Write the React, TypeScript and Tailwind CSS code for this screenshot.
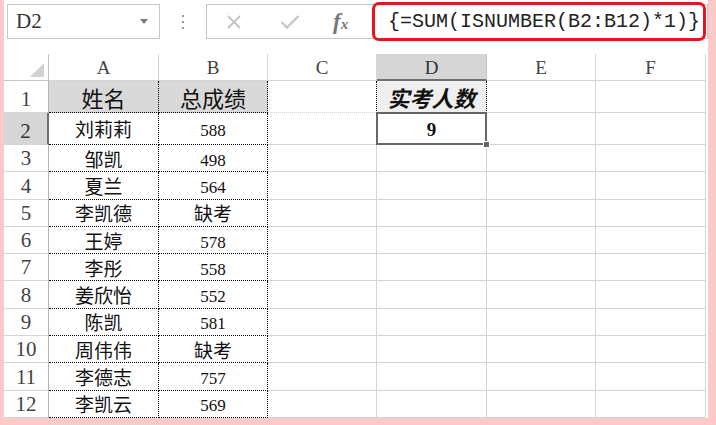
import React from 'react'

const cjk = "font-['Noto_Sans_CJK_SC',sans-serif]"

const names = ['刘莉莉', '邹凯', '夏兰', '李凯德', '王婷', '李彤', '姜欣怡', '陈凯', '周伟伟', '李德志', '李凯云']
const scores = ['588', '498', '564', '缺考', '578', '558', '552', '581', '缺考', '757', '569']
const cols = ['A', 'B', 'C', 'D', 'E', 'F']

function isNum(s: string) {
  return /^\d+$/.test(s)
}

function FormulaBar() {
  return (
    <div className="h-[54px] flex items-start pt-[4px] shrink-0">
      <div className="ml-[3px] w-[153px] h-[35px] border border-[#c6c6c6] flex items-center justify-between pl-[8px] pr-[11px]">
        <span className="font-['Liberation_Serif',serif] text-[21px] text-[#333] leading-none">D2</span>
        <span className="w-0 h-0 border-x-[4px] border-x-transparent border-t-[5px] border-t-[#7a7a7a]" />
      </div>
      <div className="ml-[22px] h-[35px] flex flex-col justify-center gap-[4px]">
        <span className="w-[2px] h-[2px] bg-[#9a9a9a]" />
        <span className="w-[2px] h-[2px] bg-[#9a9a9a]" />
        <span className="w-[2px] h-[2px] bg-[#9a9a9a]" />
      </div>
      <div className="ml-[22px] flex-1 h-[35px] border border-[#c6c6c6] flex items-center">
        <div className="w-[165px] shrink-0 flex items-center">
          <svg width="16" height="16" viewBox="0 0 16 16" className="ml-[19px]">
            <path d="M2 2 L14 14 M14 2 L2 14" stroke="#c2c2c2" strokeWidth="1.8" fill="none" />
          </svg>
          <svg width="20" height="16" viewBox="0 0 20 16" className="ml-[38px]">
            <path d="M1.5 8 L7 13.5 L18.5 2" stroke="#c8c8c8" strokeWidth="2.4" fill="none" />
          </svg>
          <span className="ml-[33px] font-['Liberation_Serif',serif] italic font-bold text-[#777] text-[23px] leading-none">
            f<span className="text-[15px]">x</span>
          </span>
        </div>
        <div className="h-[39px] shrink-0 flex-1 mr-[1px] border-[3px] border-[#e3161c] rounded-[7px] flex items-center pl-[13px]">
          <span className="font-['Liberation_Mono',monospace] text-[20px] text-[#222] leading-none">
            {'{=SUM(ISNUMBER(B2:B12)*1)}'}
          </span>
        </div>
      </div>
    </div>
  )
}

function Sheet() {
  const rows = Array.from({ length: 12 }, (_, i) => i + 1)
  return (
    <div className="grid grid-cols-[45px_110px_109px_109px_110px_109px_110px] grid-rows-[27px_32px_32px_repeat(10,27.3px)] w-max">
      {/* header row */}
      <div className="border-r border-b border-[#c4c4c4] flex items-end justify-end pr-[4px] pb-[3px]">
        <svg width="14" height="14" viewBox="0 0 14 14">
          <polygon points="14,0 14,14 0,14" fill="#d2d2d2" />
        </svg>
      </div>
      {cols.map((c) => (
        <div
          key={c}
          className={
            c === 'D'
              ? "bg-[#d6d6d6] border-r border-r-[#c4c4c4] border-b-2 border-b-[#6e6e6e] flex items-center justify-center font-['Liberation_Serif',serif] text-[19px] text-[#333] pt-[3px]"
              : "border-r border-b border-[#d4d4d4] flex items-center justify-center font-['Liberation_Serif',serif] text-[19px] text-[#444] pt-[3px]"
          }
        >
          {c}
        </div>
      ))}

      {rows.map((r) => {
        const a = r === 1 ? '姓名' : names[r - 2]
        const b = r === 1 ? '总成绩' : scores[r - 2]
        const head = r === 1
        return (
          <React.Fragment key={r}>
            <div
              className={
                r === 2
                  ? "bg-[#d6d6d6] border-b border-b-[#d4d4d4] border-r-2 border-r-[#6e6e6e] flex items-end justify-center pb-[2px] font-['Liberation_Serif',serif] text-[21px] text-[#333] leading-none"
                  : "border-b border-b-[#d4d4d4] border-r border-r-[#b4b4b4] flex items-end justify-center pb-[2px] font-['Liberation_Serif',serif] text-[21px] text-[#444] leading-none"
              }
            >
              {r}
            </div>
            <div
              className={`${head ? 'bg-[#d9d9d9] text-[22px]' : 'text-[19px]'} border-r border-b border-dotted border-black flex items-center justify-center ${cjk} text-[#111] leading-none`}
            >
              {a}
            </div>
            <div
              className={`${head ? 'bg-[#d9d9d9]' : ''} border-r border-b border-dotted border-black flex items-center justify-center text-[#111] leading-none`}
            >
              {isNum(b) ? (
                <span className="font-['Liberation_Serif',serif] text-[17px] pt-[4px]">{b}</span>
              ) : (
                <span className={`${cjk} ${head ? 'text-[22px]' : 'text-[19px]'}`}>{b}</span>
              )}
            </div>
            <div
              className={
                r === 1
                  ? 'border-r border-r-black border-dotted border-b border-b-[#d4d4d4]'
                  : 'border-r border-b border-[#d4d4d4]'
              }
            />
            {r === 1 ? (
              <div className={`bg-[#efefef] border-r border-dotted border-r-black border-b border-b-[#d4d4d4] flex items-center justify-center ${cjk} text-[22px] font-bold italic text-[#111] leading-none`}>
                实考人数
              </div>
            ) : r === 2 ? (
              <div className="relative border-r border-b border-[#d4d4d4] flex items-center justify-center font-['Liberation_Serif',serif] font-bold text-[19px] text-[#111] pt-[3px]">
                9
                <div className="absolute -top-[1px] -left-[1px] -right-[1px] -bottom-[1px] border-2 border-[#666] z-10" />
                <div className="absolute -right-[4px] -bottom-[4px] w-[7px] h-[7px] bg-[#666] border border-white z-20" />
              </div>
            ) : (
              <div className="border-r border-b border-[#d4d4d4]" />
            )}
            <div className="border-r border-b border-[#d4d4d4]" />
            <div className="border-r border-b border-[#d4d4d4]" />
          </React.Fragment>
        )
      })}
    </div>
  )
}

export default function App() {
  return (
    <div className="w-[716px] h-[425px] bg-[#fdcaca] pl-[4px] pr-[8px] pb-[7px] overflow-hidden">
      <div className="bg-white w-full h-full flex flex-col overflow-hidden">
        <FormulaBar />
        <Sheet />
      </div>
    </div>
  )
}
